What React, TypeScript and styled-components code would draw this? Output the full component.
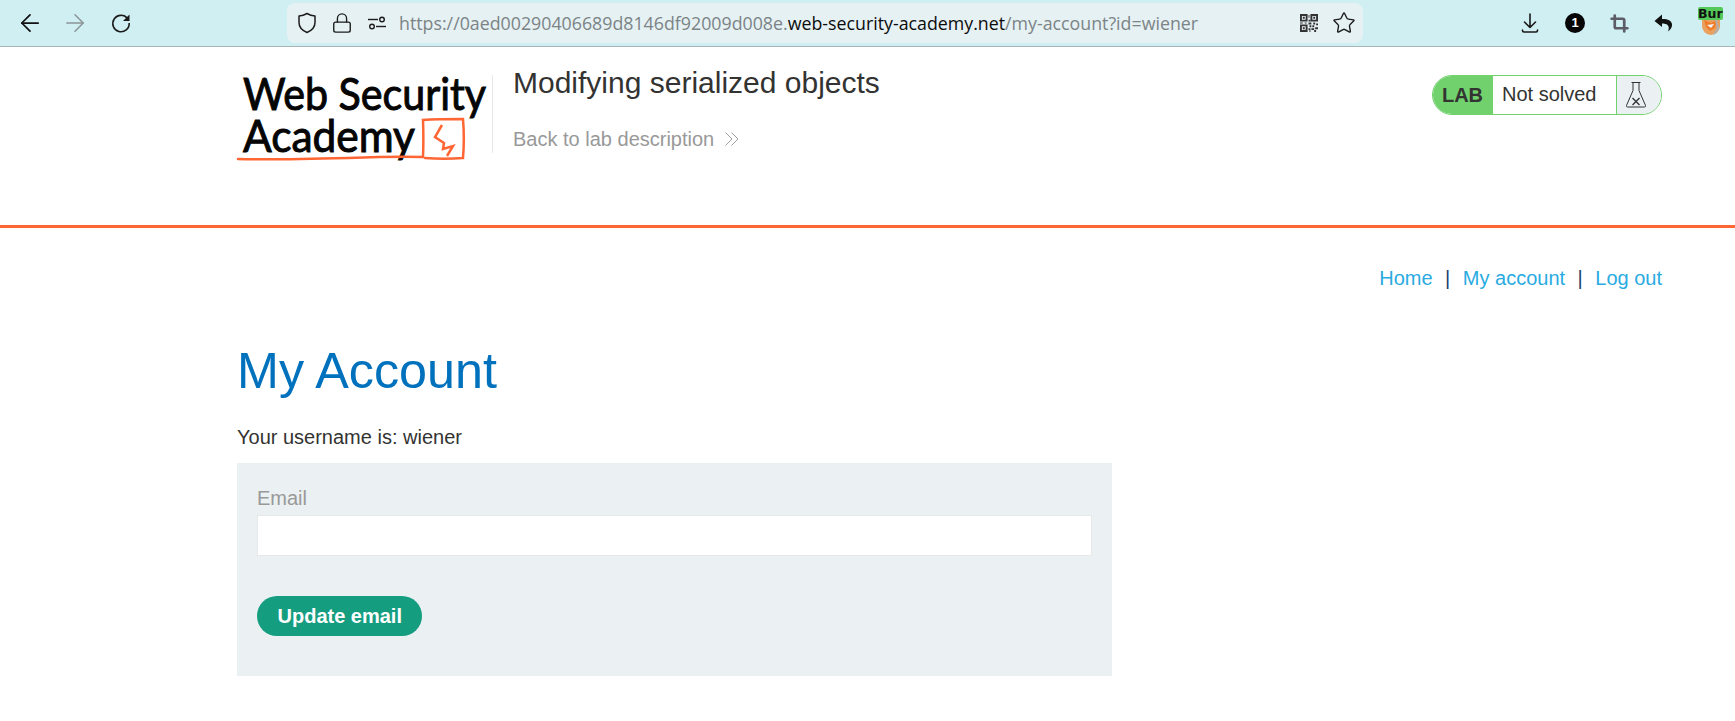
import React from "react";
import styled, { createGlobalStyle } from "styled-components";
import { ArrowLeft, ArrowRight, Crop, Lock, Star } from "lucide-react";

const App = () => (
  <>
    <GlobalStyle />
    <BrowserBar>
      <NavButtons>
        <ArrowLeft size={28} strokeWidth={1.5} color="#111" />
        <ArrowRight size={28} strokeWidth={1.3} color="#8b9496" />
        <ReloadIcon />
      </NavButtons>
      <UrlBox>
        <UrlIcons>
          <ShieldIcon />
          <Lock size={22} strokeWidth={1.5} color="#1c1c1c" />
          <PermissionIcon />
        </UrlIcons>
        <UrlText>
          https://0aed00290406689d8146df92009d008e.<b>web-security-academy.net</b>/my-account?id=wiener
        </UrlText>
        <UrlActions>
          <QrIcon />
          <Star size={24} strokeWidth={1.4} color="#1c1c1c" />
        </UrlActions>
      </UrlBox>
      <Extensions>
        <DownloadIcon />
        <CountBadge>1</CountBadge>
        <Crop size={19} strokeWidth={3.4} color="#5c5c66" />
        <ReplyIcon />
        <BurpBadge>
          <FoxIcon />
          <BurpLabel>Bur</BurpLabel>
        </BurpBadge>
      </Extensions>
    </BrowserBar>

    <Page>
      <Header>
        <LogoLink>
          <Logo />
        </LogoLink>
        <LabTitle>
          <h2>Modifying serialized objects</h2>
          <BackLink>
            Back to lab description
            <Chevrons />
          </BackLink>
        </LabTitle>
        <LabStatus>
          <LabTag>LAB</LabTag>
          <StatusText>Not solved</StatusText>
          <FlaskBox>
            <FlaskIcon />
          </FlaskBox>
        </LabStatus>
      </Header>
    </Page>
    <Rule />
    <Page>
      <TopLinks>
        <a>Home</a>
        <Sep>|</Sep>
        <a>My account</a>
        <Sep>|</Sep>
        <a>Log out</a>
      </TopLinks>
      <Title>My Account</Title>
      <Username>Your username is: wiener</Username>
      <EmailForm>
        <FieldLabel>Email</FieldLabel>
        <EmailInput />
        <SubmitButton type="button">Update email</SubmitButton>
      </EmailForm>
    </Page>
  </>
);

export default App;

const ReloadIcon = () => (
  <svg width="28" height="28" viewBox="0 0 28 28" fill="none" stroke="#1a1a1a" strokeWidth="1.6">
    <path d="M20.500 9.500A8.200 8.200 0 1 0 22.200 14" />
    <path d="M22.500 5.500v6.500H16z" fill="#1a1a1a" stroke="none" />
  </svg>
);

const ShieldIcon = () => (
  <svg width="18" height="22" viewBox="0 0 18 22" fill="none" stroke="#1c1c1c" strokeWidth="1.500" strokeLinejoin="round">
    <path d="M9 1.500c2.500 1.500 5 2.300 8 2.600v6.400c0 4.700-3.200 8-8 10-4.800-2-8-5.300-8-10V4.100c3-.3 5.500-1.100 8-2.600z" />
  </svg>
);

const PermissionIcon = () => (
  <svg width="18" height="14" viewBox="0 0 18 14" fill="none" stroke="#1c1c1c" strokeWidth="1.400">
    <path d="M0 3.500h10" />
    <circle cx="14" cy="3.500" r="2.300" />
    <circle cx="4" cy="10.500" r="2.300" />
    <path d="M8 10.500h10" />
  </svg>
);

const QrIcon = () => (
  <svg width="18" height="18" viewBox="0 0 19 19" fill="#333">
    <path fillRule="evenodd" d="M0 0h8v8H0zM2 2v4h4V2zM11 0h8v8h-8zM13 2v4h4V2zM0 11h8v8H0zM2 13v4h4v-4z" />
    <path d="M3 3h2v2H3zM14 3h2v2h-2zM3 14h2v2H3zM9 1h1v3H9zM9 6h2v2H9zM9 9h3v2H9zM14 9h2v2h-2zM17 10h2v2h-2zM10 12h2v2h-2zM13 12h2v2h-2zM9 15h2v2H9zM12 15h3v2h-3zM16 14h3v2h-3zM10 17h1v2h-1zM15 17h2v2h-2zM0 9h3v1H0zM5 9h2v1H5z" />
  </svg>
);

const DownloadIcon = () => (
  <svg width="20" height="22" viewBox="0 0 20 22" fill="none" stroke="#1a1a1a" strokeWidth="1.600" strokeLinecap="round" strokeLinejoin="round">
    <path d="M10 2v13M4.500 10l5.500 5.500 5.500-5.500M2.500 18v.5a1.500 1.500 0 0 0 1.500 1.500h12a1.500 1.500 0 0 0 1.500-1.500V18" />
  </svg>
);

const ReplyIcon = () => (
  <svg width="19" height="18" viewBox="0 0 19 18" fill="#111">
    <path d="M8 .5 .5 7 8 13V9.500c3.600 0 6.200.9 6.700 3.800.2 1.500-.2 3-.9 4.200 2.900-1.600 4.600-4.400 4.200-7.400C17.500 6.400 13.500 4.700 8 4.900z" />
  </svg>
);

const FoxIcon = () => (
  <svg width="20" height="16" viewBox="0 0 20 16">
    <path d="M1 1h18v6a9 9 0 0 1-18 0z" fill="#e9a15f" />
    <path d="M3 1l7 3 6-3-2 8-5 3-4-4z" fill="#ef7d2b" />
    <path d="M15 1l2 9-4 5" stroke="#b0b0b0" strokeWidth="2" fill="none" />
    <path d="M6 6l7-1-3 4z" fill="#f4f4f4" />
  </svg>
);

const Chevrons = () => (
  <svg width="16" height="16" viewBox="0 0 16 16" fill="none" stroke="#a0a0a0" strokeWidth="1">
    <path d="M1.500 1.500 8 8l-6.500 6.500M7.500 1.500 14 8l-6.500 6.500" />
  </svg>
);

const FlaskIcon = () => (
  <svg width="22" height="28" viewBox="0 0 22 28" fill="none" stroke="#333" strokeWidth="1">
    <path d="M6.500 1.500h9M8 1.500v8L1.500 24.500a1 1 0 0 0 1 1.500h17a1 1 0 0 0 1-1.500L14 9.500v-8" />
    <path d="M7.500 17l7 7M14.500 17l-7 7" strokeWidth="1.400" />
  </svg>
);

const Logo = () => (
  <svg width="252" height="96" viewBox="0 0 252 96">
    <LogoWord x="6" y="38" textLength="243" lengthAdjust="spacingAndGlyphs">
      Web Security
    </LogoWord>
    <LogoWord x="6" y="80" textLength="172" lengthAdjust="spacingAndGlyphs">
      Academy
    </LogoWord>
    <path
      d="M1 87c30 1 70 0 110-1 25-1 50-2 75-1 .5-13 .5-25 0-37 13-1 26-1 40-1 1 12 1 27 0 39-13 1-25 1-38 0"
      fill="none"
      stroke="#ff6633"
      strokeWidth="2.500"
      strokeLinecap="round"
    />
    <path d="M205 53l-7 12 9 6-1 6 10-3-6 10" fill="none" stroke="#ff6633" strokeWidth="2.500" />
  </svg>
);

const GlobalStyle = createGlobalStyle`
  html, body {
    margin: 0;
    background: #fff;
    font-family: "Liberation Sans", Arial, sans-serif;
    color: #333332;
  }
`;

const BrowserBar = styled.div`
  display: flex;
  align-items: center;
  height: 46px;
  background: #d0eff3;
  border-bottom: 1px solid #a7b4b8;
`;

const NavButtons = styled.div`
  display: flex;
  align-items: center;
  gap: 17.5px;
  width: 287px;
  padding-left: 15.5px;
  box-sizing: border-box;
  flex: none;
`;

const UrlBox = styled.div`
  display: flex;
  align-items: center;
  width: 1076px;
  height: 40px;
  flex: none;
  background: #e6f1f4;
  border-radius: 8px;
  padding: 0 7px 0 11px;
  box-sizing: border-box;
`;

const UrlIcons = styled.div`
  display: flex;
  align-items: center;
  gap: 15px;
  margin-right: 13px;
`;

const UrlText = styled.div`
  flex: 1;
  font-family: "Open Sans", "Noto Sans", sans-serif;
  font-size: 17.8px;
  color: #7b8486;
  white-space: nowrap;

  b {
    font-weight: 400;
    color: #0c0c0c;
  }
`;

const UrlActions = styled.div`
  display: flex;
  align-items: center;
  gap: 14px;
`;

const Extensions = styled.div`
  display: flex;
  align-items: center;
  gap: 25px;
  padding-left: 157px;
`;

const CountBadge = styled.div`
  width: 20px;
  height: 20px;
  border-radius: 50%;
  background: #050505;
  color: #fff;
  font-size: 13px;
  font-weight: 700;
  line-height: 20px;
  text-align: center;
`;

const BurpBadge = styled.div`
  position: relative;
  width: 26px;
  height: 28px;
  margin-top: -4px;
  display: flex;
  align-items: flex-end;
  justify-content: center;
`;

const BurpLabel = styled.span`
  position: absolute;
  top: 0;
  left: 0;
  background: #55c85a;
  color: #111;
  font-family: "DejaVu Sans", sans-serif;
  font-size: 12.5px;
  font-weight: 700;
  line-height: 13px;
  border-radius: 2px;
`;

const Page = styled.div`
  width: 1425px;
  margin-left: 237px;
`;

const Header = styled.header`
  display: flex;
  align-items: flex-start;
  height: 178px;
  box-sizing: border-box;
  padding-top: 28px;
`;

const LogoLink = styled.div`
  width: 255px;
  flex: none;
  height: 78px;
  border-right: 1px solid #e6e8ea;
  margin-right: 20px;

  svg {
    display: block;
    margin-top: -3px;
    overflow: visible;
  }
`;

const LogoWord = styled.text`
  font-family: "Lato", "Open Sans", sans-serif;
  font-size: 45px;
  font-weight: 400;
  fill: #050505;
  stroke: #050505;
  stroke-width: 1px;
`;

const LabTitle = styled.div`
  flex: 1;
  margin-top: -10px;

  h2 {
    margin: 0;
    font-size: 30px;
    font-weight: 400;
    line-height: 36px;
    color: #333332;
  }
`;

const BackLink = styled.div`
  display: flex;
  align-items: center;
  gap: 10px;
  margin-top: 26px;
  font-size: 20px;
  line-height: 24px;
  color: #999;
`;

const LabStatus = styled.div`
  display: flex;
  align-items: stretch;
  width: 230px;
  height: 40px;
  flex: none;
  box-sizing: border-box;
  border: 1px solid #70d16d;
  border-radius: 20px;
  overflow: hidden;
`;

const LabTag = styled.div`
  width: 60px;
  background: #70d16d;
  padding-right: 1px;
  box-sizing: border-box;
  font-size: 20px;
  font-weight: 700;
  line-height: 38px;
  text-align: center;
  color: #333332;
  flex: none;
`;

const StatusText = styled.div`
  flex: 1;
  padding-left: 9px;
  font-size: 20px;
  line-height: 36px;
  color: #333332;
`;

const FlaskBox = styled.div`
  width: 45px;
  flex: none;
  display: flex;
  align-items: center;
  justify-content: center;
  background: #ebf0f2;
  border-left: 1px solid #70d16d;
  padding-right: 6px;
  box-sizing: border-box;
`;

const Rule = styled.div`
  height: 3px;
  background: #ff6633;
`;

const TopLinks = styled.nav`
  display: flex;
  justify-content: flex-end;
  align-items: center;
  gap: 12.5px;
  padding-top: 38px;
  font-size: 20px;
  line-height: 24px;

  a {
    color: #29abe2;
  }
`;

const Sep = styled.span`
  color: #1c3f6e;
`;

const Title = styled.h1`
  margin: 50px 0 0;
  font-size: 50.3px;
  font-weight: 400;
  line-height: 62px;
  color: #0071bc;
`;

const Username = styled.p`
  margin: 23px 0 0;
  font-size: 20px;
  line-height: 24px;
  color: #333332;
`;

const EmailForm = styled.form`
  display: flex;
  flex-direction: column;
  align-items: flex-start;
  width: 875px;
  height: 213px;
  margin-top: 14px;
  padding: 23px 20px 0;
  box-sizing: border-box;
  background: #ebf0f2;
`;

const FieldLabel = styled.label`
  font-size: 20px;
  line-height: 24px;
  color: #999;
`;

const EmailInput = styled.input`
  width: 835px;
  height: 41px;
  margin-top: 5px;
  box-sizing: border-box;
  background: #fff;
  border: 1px solid #e6e8ea;
`;

const SubmitButton = styled.button`
  height: 40px;
  margin-top: 40px;
  padding: 0 20.5px;
  border: 0;
  border-radius: 25px;
  background: #159d80;
  color: #fff;
  font-family: inherit;
  font-size: 20px;
  font-weight: 700;
`;
